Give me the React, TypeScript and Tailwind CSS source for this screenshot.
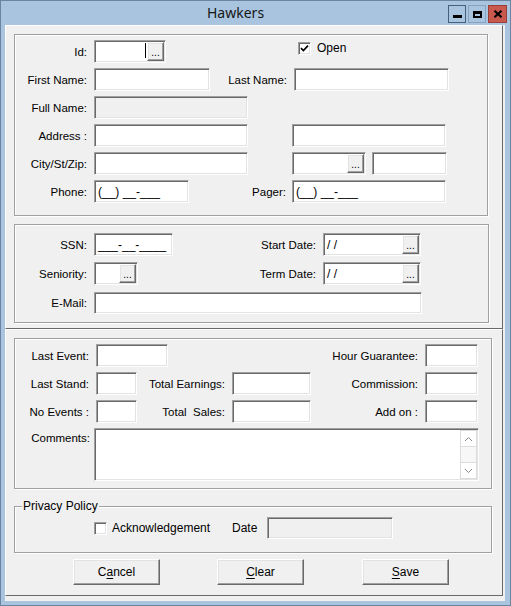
import React from 'react';

const sunken =
  'border border-t-[#a0a0a0] border-l-[#a0a0a0] border-r-white border-b-white shadow-[inset_1px_1px_0_#696969,inset_-1px_-1px_0_#e3e3e3]';
const raised =
  'border border-t-white border-l-white border-r-[#696969] border-b-[#696969] shadow-[inset_-1px_-1px_0_#a0a0a0,inset_1px_1px_0_#e3e3e3] bg-[#f0f0f0]';
const etched = 'border border-[#a0a0a0] shadow-[1px_1px_0_#ffffff,inset_1px_1px_0_#ffffff]';

const Label: React.FC<{ className: string; children: React.ReactNode }> = ({ className, children }) => (
  <div className={`${className} shrink-0 text-right text-[11.5px] leading-[14px] whitespace-pre`}>{children}</div>
);

const Field: React.FC<{
  className: string;
  disabled?: boolean;
  dots?: boolean;
  text?: string;
}> = ({ className, disabled, dots, text }) => (
  <div className={`${className} ${sunken} ${disabled ? 'bg-[#f0f0f0]' : 'bg-white'} shrink-0 flex p-[1px]`}>
    <div className="flex-1 flex items-center pl-[2px] text-[12px] leading-[14px] whitespace-pre overflow-hidden">
      {text}
    </div>
    {dots && (
      <div className={`${raised} w-[17px] flex items-end justify-center pb-[2px] text-[10px] leading-[10px]`}>...</div>
    )}
  </div>
);

const Check: React.FC<{ checked?: boolean }> = ({ checked }) => (
  <div className={`${sunken} w-[13px] h-[13px] bg-white shrink-0 flex items-center justify-center`}>
    {checked && (
      <svg width="9" height="9" viewBox="0 0 9 9">
        <path d="M1 4.2 L3.4 6.6 L8 1.6" fill="none" stroke="#000" strokeWidth="1.7" />
      </svg>
    )}
  </div>
);

const Btn: React.FC<{ pre?: string; u: string; post: string; className: string }> = ({ pre, u, post, className }) => (
  <div className={`${className} ${raised} w-[87px] h-[26px] flex items-center justify-center text-[12px] leading-[14px]`}>
    {pre}
    <span className="underline underline-offset-2">{u}</span>
    {post}
  </div>
);

export default function App() {
  return (
    <div className="w-[511px] h-[606px] bg-[#a9c4df] border border-[#6b84a0] flex flex-col font-['Liberation_Sans',Arial,sans-serif] text-black select-none">
      {/* Title bar */}
      <div className="h-[24px] flex items-start shrink-0">
        <span className="ml-[206px] mt-[3px] text-[14px] leading-[18px] font-['Noto_Sans',sans-serif] text-[#161616]">
          Hawkers
        </span>
        <div className="ml-auto mr-[3px] mt-[4px] flex gap-[2px]">
          <div className="w-[18px] h-[18px] border border-[#45607e] flex items-end justify-center pb-[4px]">
            <div className="w-[9px] h-[3px] bg-black" />
          </div>
          <div className="w-[18px] h-[18px] border border-[#87a3c2] flex items-center justify-center">
            <div className="w-[9px] h-[7px] border-2 border-t-[3px] border-black" />
          </div>
          <div className="w-[19px] h-[18px] border border-[#9a3e3a] bg-[#c9584d] flex items-center justify-center">
            <svg width="10" height="8" viewBox="0 0 10 8">
              <path d="M1.5 0.8 L8.5 7.2 M8.5 0.8 L1.5 7.2" stroke="#000" strokeWidth="2.2" />
            </svg>
          </div>
        </div>
      </div>

      {/* Client area */}
      <div className="ml-[4px] mr-[5px] mb-[4px] h-[576px] bg-[#f0f0f0] flex flex-col pr-[2px] pb-[5px]">
        {/* Top panel */}
        <div className="h-[304px] shrink-0 border border-t-white border-l-white border-r-[#696969] border-b-[#696969] flex flex-col">
          {/* Section 1 */}
          <div className={`${etched} ml-[8px] mt-[8px] w-[474px] h-[182px] pt-[5px] flex flex-col gap-[5px]`}>
            <div className="flex items-center h-[23px]">
              <Label className="w-[79px] pr-[7px]">Id:</Label>
              <div className="relative">
                <Field className="w-[72px] h-[23px]" dots />
                <div className="absolute left-[51px] top-[3px] w-[1px] h-[15px] bg-black" />
              </div>
              <div className="self-start mt-[1px] ml-[132px] flex items-center">
                <Check checked />
                <span className="ml-[6px] text-[12px] leading-[14px]">Open</span>
              </div>
            </div>
            <div className="flex items-center h-[23px]">
              <Label className="w-[79px] pr-[7px]">First Name:</Label>
              <Field className="w-[116px] h-[23px]" />
              <Label className="w-[84px] pr-[7px]">Last Name:</Label>
              <Field className="w-[155px] h-[23px]" />
            </div>
            <div className="flex items-center h-[23px]">
              <Label className="w-[79px] pr-[7px]">Full Name:</Label>
              <Field className="w-[154px] h-[23px]" disabled />
            </div>
            <div className="flex items-center h-[23px]">
              <Label className="w-[79px] pr-[7px]">Address :</Label>
              <Field className="w-[154px] h-[23px]" />
              <Field className="ml-[44px] w-[154px] h-[23px]" />
            </div>
            <div className="flex items-center h-[23px]">
              <Label className="w-[79px] pr-[7px]">City/St/Zip:</Label>
              <Field className="w-[154px] h-[23px]" />
              <Field className="ml-[44px] w-[74px] h-[23px]" dots />
              <Field className="ml-[6px] w-[75px] h-[23px]" />
            </div>
            <div className="flex items-center h-[23px]">
              <Label className="w-[79px] pr-[7px]">Phone:</Label>
              <Field className="w-[95px] h-[23px]" text="(__) __-___" />
              <Label className="w-[103px] pr-[6px]">Pager:</Label>
              <Field className="w-[154px] h-[23px]" text="(__) __-___" />
            </div>
          </div>

          {/* Section 2 */}
          <div className={`${etched} ml-[8px] mt-[8px] w-[475px] h-[99px] pt-[8px] flex flex-col gap-[6px]`}>
            <div className="flex items-center h-[23px]">
              <Label className="w-[79px] pr-[7px]">SSN:</Label>
              <Field className="w-[79px] h-[23px]" text="___-__-____" />
              <Label className="w-[150px] pr-[7px]">Start Date:</Label>
              <Field className="w-[98px] h-[23px]" dots text="/ /" />
            </div>
            <div className="flex items-center h-[23px]">
              <Label className="w-[79px] pr-[7px]">Seniority:</Label>
              <Field className="w-[44px] h-[23px]" dots />
              <Label className="w-[185px] pr-[7px]">Term Date:</Label>
              <Field className="w-[98px] h-[23px]" dots text="/ /" />
            </div>
            <div className="flex items-center h-[23px]">
              <Label className="w-[79px] pr-[7px]">E-Mail:</Label>
              <Field className="w-[328px] h-[22px]" />
            </div>
          </div>
        </div>

        {/* Bottom panel */}
        <div className="h-[267px] shrink-0 border border-t-white border-l-white border-r-[#696969] border-b-[#696969] flex flex-col">
          {/* Section 3 */}
          <div className={`${etched} ml-[8px] mt-[8px] w-[478px] h-[151px] pt-[5px] flex flex-col gap-[5px]`}>
            <div className="flex items-center h-[23px]">
              <Label className="w-[81px] pr-[7px]">Last Event:</Label>
              <Field className="w-[72px] h-[23px]" />
              <Label className="w-[257px] pr-[7px]">Hour Guarantee:</Label>
              <Field className="w-[53px] h-[23px]" />
            </div>
            <div className="flex items-center h-[23px]">
              <Label className="w-[81px] pr-[7px]">Last Stand:</Label>
              <Field className="w-[41px] h-[23px]" />
              <Label className="w-[95px] pr-[7px]">Total Earnings:</Label>
              <Field className="w-[79px] h-[23px]" />
              <Label className="w-[114px] pr-[7px]">Commission:</Label>
              <Field className="w-[53px] h-[23px]" />
            </div>
            <div className="flex items-center h-[23px]">
              <Label className="w-[81px] pr-[7px]">No Events :</Label>
              <Field className="w-[41px] h-[23px]" />
              <Label className="w-[95px] pr-[7px]">Total  Sales:</Label>
              <Field className="w-[79px] h-[23px]" />
              <Label className="w-[114px] pr-[7px]">Add on :</Label>
              <Field className="w-[53px] h-[23px]" />
            </div>
            <div className="flex items-start">
              <Label className="w-[79px] pr-[4px] pt-[3px]">Comments:</Label>
              <div className={`${sunken} bg-white w-[385px] h-[53px] flex p-[1px]`}>
                <div className="flex-1" />
                <div className="w-[17px] flex flex-col">
                  <div className="h-[17px] border border-[#dcdcdc] flex items-center justify-center">
                    <svg width="9" height="6" viewBox="0 0 9 6">
                      <path d="M1 5 L4.5 1.5 L8 5" fill="none" stroke="#8a8a8a" strokeWidth="1" />
                    </svg>
                  </div>
                  <div className="flex-1 border-x border-[#dcdcdc] bg-[#f7f7f7]" />
                  <div className="h-[17px] border border-[#dcdcdc] flex items-center justify-center">
                    <svg width="9" height="6" viewBox="0 0 9 6">
                      <path d="M1 1 L4.5 4.5 L8 1" fill="none" stroke="#8a8a8a" strokeWidth="1" />
                    </svg>
                  </div>
                </div>
              </div>
            </div>
          </div>

          {/* Privacy Policy */}
          <fieldset className="ml-[8px] mt-[10px] w-[478px] border border-[#a0a0a0] shadow-[1px_1px_0_#ffffff,inset_1px_1px_0_#ffffff] pt-[4px] pb-[13px]">
            <legend className="ml-[7px] px-[1px] bg-[#f0f0f0] text-[12px] leading-[14px]">Privacy Policy</legend>
            <div className="flex items-center h-[22px]">
              <div className="ml-[79px]">
                <Check />
              </div>
              <span className="ml-[5px] w-[120px] text-[12px] leading-[14px]">Acknowledgement</span>
              <span className="w-[35px] text-[12px] leading-[14px]">Date</span>
              <Field className="w-[126px] h-[22px]" disabled />
            </div>
          </fieldset>

          {/* Buttons */}
          <div className="mt-[6px] flex">
            <Btn className="ml-[67px]" pre="C" u="a" post="ncel" />
            <Btn className="ml-[57px]" u="C" post="lear" />
            <Btn className="ml-[58px]" u="S" post="ave" />
          </div>
        </div>
      </div>
    </div>
  );
}
